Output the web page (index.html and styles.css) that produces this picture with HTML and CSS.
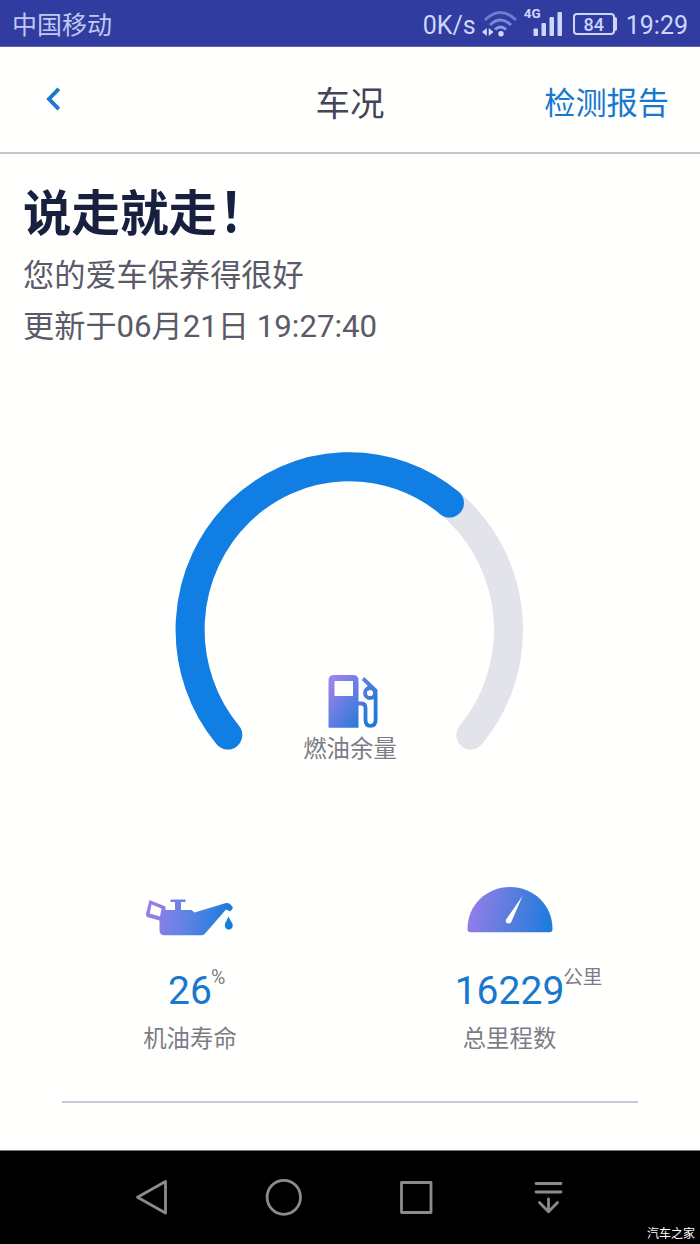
FILE: index.html
```html
<!DOCTYPE html>
<html lang="zh-CN">
<head>
<meta charset="utf-8">
<title>车况</title>
<link rel="stylesheet" href="styles.css">
</head>
<body>
<div class="status-bar">
  <span class="carrier">中国移动</span>
  <span class="speed">0K/s</span>
  <svg class="wifi" width="36" height="30" viewBox="0 0 36 30" fill="none">
    <g stroke-width="3">
      <path d="M3 12Q18.500 -3 34 12" stroke="#6f7ccc"/>
      <path d="M8 17Q18.500 7 29 17" stroke="#7c89d4"/>
      <path d="M13 21.500Q18.500 16.500 24 21.500" stroke="#8e9be0"/>
    </g>
    <circle cx="19" cy="25.800" r="2.700" fill="#d3dbff"/>
    <path d="M0 24L4.800 20V28ZM11.500 24L6.700 20V28Z" fill="#d3dbff"/>
  </svg>
  <div class="signal">
    <span class="network">4G</span>
    <svg width="30" height="26" viewBox="0 0 30 26" fill="#cdd6fb">
      <rect x="0.500" y="17.500" width="4.500" height="7.500" rx="1"/>
      <rect x="8.500" y="12" width="4.500" height="13" rx="1"/>
      <rect x="16.500" y="6" width="4.500" height="19" rx="1"/>
      <rect x="24.500" y="1" width="4.500" height="24" rx="1"/>
    </svg>
  </div>
  <div class="battery"><span class="battery-level">84</span></div>
  <span class="clock">19:29</span>
</div>

<header class="header">
  <svg class="back" width="16" height="24" viewBox="0 0 16 24" fill="none" stroke="#1878d0" stroke-width="3.900"><path d="M13.800 1.800L4 12L13.800 22.200"/></svg>
  <h1 class="title">车况</h1>
  <a class="report">检测报告</a>
</header>

<main class="content">
  <section class="summary">
    <h2 class="headline">说走就走<span class="bang">！</span></h2>
    <p class="line">您的爱车保养得很好</p>
    <p class="line line-time">更新于06月21日 19:27:40</p>
  </section>

  <section class="gauge">
    <svg class="dial" width="360" height="310" viewBox="170 445 360 310" fill="none" stroke-width="29" stroke-linecap="round">
      <path d="M227.800 735A159.200 163 0 1 1 470.800 735" stroke="#e2e3eb"/>
      <path d="M227.800 735A159.200 163 0 1 1 470.800 735" stroke="#117ee3" pathLength="100" stroke-dasharray="64.800 100"/>
    </svg>
    <div class="fuel">
      <svg width="50" height="54" viewBox="328 674 50 54" fill="none">
        <defs><linearGradient id="fuelFill" gradientUnits="userSpaceOnUse" x1="328" y1="684" x2="372" y2="718"><stop stop-color="#9d83ed"/><stop offset=".55" stop-color="#587cdf"/><stop offset="1" stop-color="#1e79d6"/></linearGradient></defs>
        <path fill="url(#fuelFill)" fill-rule="evenodd" d="M328.500 727.800V680.500Q328.500 675 334 675H353Q358.500 675 358.500 680.500V727.800ZM334.500 681V696H353V681Z"/>
        <g stroke="url(#fuelFill)" stroke-width="3.800">
          <path d="M358 703.500H361.500Q365.500 703.500 365.500 708V720Q365.500 725.800 370.500 725.800Q375.600 725.800 375.600 720V690.500L363 678.500"/>
          <circle cx="370" cy="693" r="5"/>
          <path d="M370 685.500L366.800 690"/>
        </g>
      </svg>
      <span class="label">燃油余量</span>
    </div>
  </section>

  <section class="stats">
    <div class="stat">
      <svg class="stat-icon" width="90" height="50" viewBox="145 886 90 50">
        <defs><linearGradient id="oilFill" gradientUnits="userSpaceOnUse" x1="146" y1="900" x2="232" y2="918"><stop stop-color="#a27cec"/><stop offset=".5" stop-color="#5f83e5"/><stop offset="1" stop-color="#147bd9"/></linearGradient></defs>
        <path fill="url(#oilFill)" fill-rule="evenodd" d="M149.500 900L165.500 906.500V910H175V902H170.500V899.500H185.500V902H181V910H191.500L194.500 912.500L226 903Q228 902.500 230 904L233 907.500L230.500 911.500L226 909.500L206 932.500Q204 935.300 201 935.300H164.500Q159.500 935.300 159.500 930V920.500L148.500 917.500Q145.500 916.500 146 913.500ZM151.500 904.500L149.800 913.500L160 916.500L161.500 908.500Z"/>
        <path fill="url(#oilFill)" d="M228.500 916C227.500 920 224.800 922.500 224.800 925.500C224.800 931 232.800 931 232.800 925.500C232.800 922.500 229.500 920 228.500 916Z"/>
      </svg>
      <div class="value">26<span class="unit unit-percent">%</span></div>
      <span class="label">机油寿命</span>
    </div>
    <div class="stat">
      <svg class="stat-icon" width="90" height="50" viewBox="464.500 886 90 50">
        <defs><linearGradient id="dialFill" gradientUnits="userSpaceOnUse" x1="467" y1="905" x2="551" y2="922"><stop stop-color="#967dea"/><stop offset=".5" stop-color="#5b7ddd"/><stop offset="1" stop-color="#1b7cdf"/></linearGradient></defs>
        <path fill="url(#dialFill)" d="M467 929C467 905 486 887 509.500 887S552 905 552 929Q552 932.300 549 932.300H470Q467 932.300 467 929Z"/>
        <path fill="#fff" d="M522 896L505.500 919.500Q504.500 922.500 507 923.200Q510 924 511 921.500Z"/>
      </svg>
      <div class="value">16229<span class="unit">公里</span></div>
      <span class="label">总里程数</span>
    </div>
  </section>
</main>

<nav class="nav-bar">
  <svg width="440" height="46" viewBox="130 1174 440 46" fill="none" stroke="#8b8b8b" stroke-width="2.800" stroke-linecap="round" stroke-linejoin="round">
    <path d="M165.500 1181.500V1213L137.500 1197.300Z"/>
    <ellipse cx="283.800" cy="1197.300" rx="16.700" ry="17"/>
    <rect x="401.500" y="1182.500" width="29.500" height="30"/>
    <path d="M536 1183.500H561M536 1192H561M548.500 1199V1211.500M539.500 1202.500L548.500 1211.800L557.500 1202.500"/>
  </svg>
  <span class="watermark">汽车之家</span>
</nav>
</body>
</html>
```

FILE: styles.css
```css
* { box-sizing: border-box; }

body {
  margin: 0;
  width: 700px;
  height: 1244px;
  display: flex;
  flex-direction: column;
  overflow: hidden;
  background: #fffffd;
  font-family: Roboto, "Noto Sans CJK SC", sans-serif;
}

h1, h2, p { margin: 0; font-weight: 400; }
svg { display: block; flex: none; }

.status-bar {
  height: 47px;
  flex: none;
  display: flex;
  align-items: center;
  padding: 2px 12px 0;
  background: #303c9f;
  border-bottom: 1px solid #5a64ad;
  color: #cdd6fb;
  font-size: 25px;
  line-height: 44px;
  white-space: nowrap;
}
.carrier { margin-right: auto; padding-top: 3px; color: #c0c8f2; }
.speed, .clock { padding-top: 3px; }
.wifi { margin-left: 6px; margin-top: -2px; }
.signal { display: flex; margin-left: 15px; position: relative; }
.network {
  position: absolute;
  left: -9px;
  top: -5px;
  font-size: 13.500px;
  line-height: 14px;
  font-weight: 700;
}
.battery {
  width: 42px;
  height: 22px;
  margin: 0 11px 0 10px;
  border: 2px solid #cdd6fb;
  border-radius: 4px;
  position: relative;
  text-align: center;
  font-size: 18px;
  font-weight: 500;
  line-height: 19px;
}
.battery::after {
  content: "";
  position: absolute;
  right: -4px;
  top: 2px;
  width: 3px;
  height: 14px;
  background: #cdd6fb;
  border-radius: 0 2px 2px 0;
}

.header {
  height: 107px;
  flex: none;
  display: grid;
  grid-template-columns: 1fr auto 1fr;
  align-items: center;
  padding: 0 31px 0 45px;
  border-bottom: 2px solid #c5c5d2;
}
.back { margin-top: -1px; }
.title { font-size: 34.500px; line-height: 50px; color: #44445a; margin-left: -14px; margin-top: 9px; }
.report { justify-self: end; font-size: 31.200px; line-height: 50px; color: #1878d0; margin-top: 8px; }

.content { flex: 1; display: flex; flex-direction: column; }
.summary { padding: 26px 23px 0; height: 291px; }
.headline { font-size: 48.500px; line-height: 69px; font-weight: 700; color: #17213f; }
.bang { display: inline-block; transform: translate(2px, -1px) scaleY(1.12); }
.line { font-size: 31.200px; line-height: 52px; color: #5a5a69; white-space: nowrap; position: relative; top: 1px; }
.line-time { top: 0; }

.gauge { display: grid; justify-items: center; height: 310px; }
.dial, .fuel { grid-area: 1 / 1; }
.fuel {
  align-self: end;
  display: flex;
  flex-direction: column;
  align-items: center;
}
.fuel svg { margin-left: 6px; }
.fuel .label { height: 27px; line-height: 42px; }
.label { font-size: 23.400px; line-height: 36px; color: #7c7c87; }

.stats {
  display: flex;
  height: 217px;
  margin: 131px 62px 0;
  border-bottom: 2px solid #c9c9dc;
  justify-content: space-between;
}
.stat { width: 256px; display: flex; flex-direction: column; align-items: center; }
.value {
  position: relative;
  margin-top: 31px;
  font-size: 39px;
  line-height: 48px;
  color: #1878d0;
}
.unit {
  position: absolute;
  left: calc(100% - 1px);
  top: 1px;
  font-size: 19.500px;
  line-height: 20px;
  color: #7c7c87;
  white-space: nowrap;
}
.stat .label { margin-top: 6px; }
.stat:last-child { margin-right: 0.500px; }

.nav-bar {
  position: relative;
  height: 94px;
  flex: none;
  padding: 23px 130px 0;
  background: #000;
  border-top: 1px solid #777;
}
.watermark {
  position: absolute;
  right: 5px;
  bottom: 2px;
  font: 12px/18px "Noto Sans CJK SC", sans-serif;
  color: #fff;
}
```
